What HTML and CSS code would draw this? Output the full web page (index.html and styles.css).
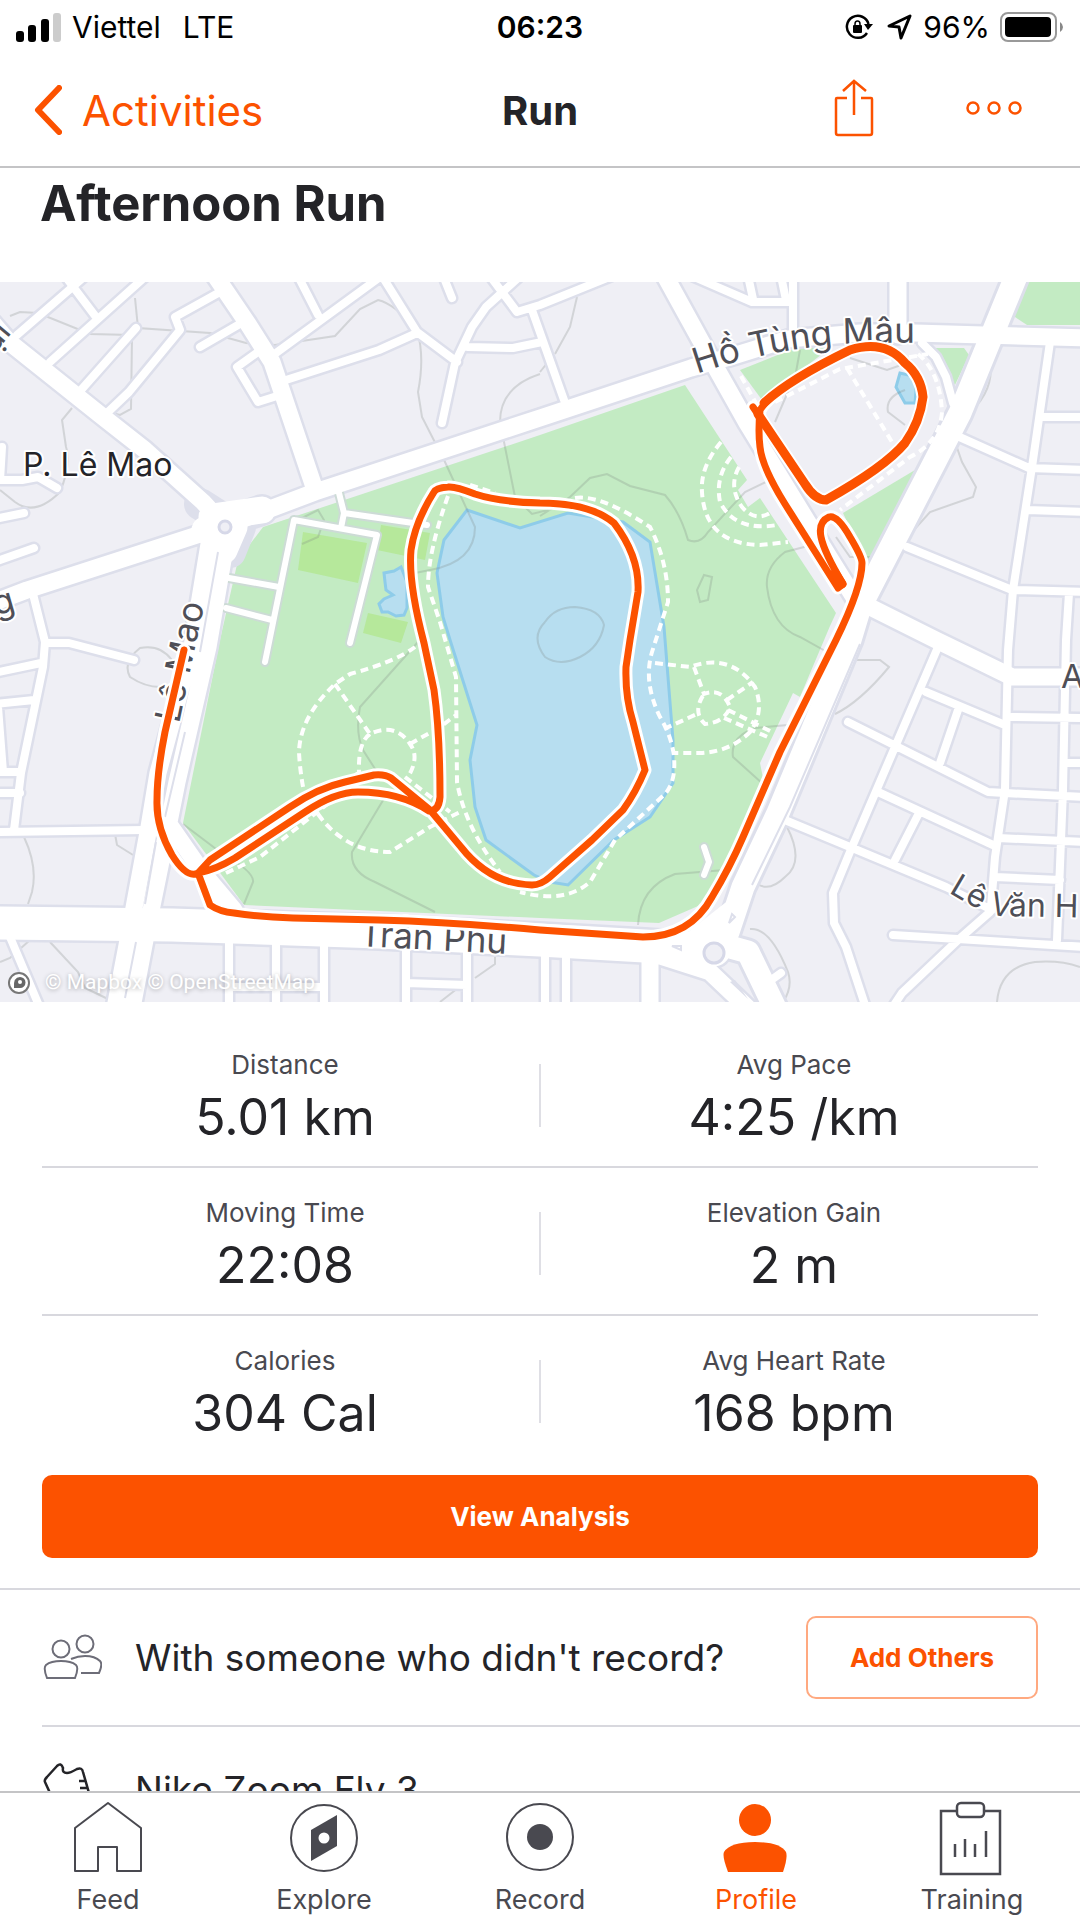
FILE: index.html
```html
<!DOCTYPE html>
<html lang="en">
<head>
  <meta charset="UTF-8">
  <meta name="viewport" content="width=device-width, initial-scale=1">
  <title>Afternoon Run</title>
  <link rel="stylesheet" href="styles.css">
</head>
<body>
  <div class="status-bar">
    <div class="status-left">
      <svg width="46" height="30" viewBox="0 0 46 30">
        <rect x="0" y="19" width="8" height="11" rx="3"/>
        <rect x="12" y="13" width="8" height="17" rx="3"/>
        <rect x="25" y="7" width="8" height="23" rx="3"/>
        <rect x="37" y="1" width="8" height="29" rx="3" fill="#ccc"/>
      </svg>
      <span>Viettel</span>
      <span class="network">LTE</span>
    </div>
    <div class="clock">06:23</div>
    <div class="status-right">
      <svg width="28" height="28" viewBox="0 0 28 28">
        <path d="M22 20A11 11 0 1 1 23.500 11" fill="none" stroke="#000" stroke-width="2.500"/>
        <path d="M19 11h9l-5 6z"/>
        <rect x="8" y="12" width="9" height="8" rx="1"/>
        <path d="M10 13v-2a2.500 3 0 0 1 5 0v2" fill="none" stroke="#000" stroke-width="1.500"/>
      </svg>
      <svg class="arrow" width="26" height="26" viewBox="0 0 26 26">
        <path d="M2 12L23 2L14 24L12 13Z" fill="none" stroke="#000" stroke-width="3" stroke-linejoin="round"/>
      </svg>
      <span>96%</span>
      <svg width="64" height="30" viewBox="0 0 64 30">
        <rect x="1" y="1" width="55" height="28" rx="7" fill="none" stroke="#999" stroke-width="2"/>
        <rect x="5" y="5" width="46" height="20" rx="4"/>
        <path d="M60 10q3 2 3 5t-3 5z" fill="#888"/>
      </svg>
    </div>
  </div>

  <header class="nav-bar">
    <a class="back" href="#">
      <svg width="30" height="50" viewBox="0 0 30 50">
        <path d="M27 3L6 25L27 47" fill="none" stroke="#fc5200" stroke-width="6" stroke-linecap="round" stroke-linejoin="round"/>
      </svg>
      Activities
    </a>
    <div class="nav-title">Run</div>
    <div class="nav-actions">
      <button type="button" aria-label="Share">
        <svg width="40" height="58" viewBox="0 0 40 58">
          <path d="M13 19H3q-1 0-1 1V54q0 2 2 2H36q2 0 2-2V20q0-1-1-1H27M20 36V2M9 12L20 2L32 12" fill="none" stroke="#fc5200" stroke-width="2.500"/>
        </svg>
      </button>
      <button type="button" aria-label="More">
        <svg width="56" height="14" viewBox="0 0 56 14" fill="none" stroke="#fc5200" stroke-width="2.500">
          <circle cx="7" cy="7" r="5.500"/>
          <circle cx="28" cy="7" r="5.500"/>
          <circle cx="49" cy="7" r="5.500"/>
        </svg>
      </button>
    </div>
  </header>

  <main>
    <h1>Afternoon Run</h1>

    <svg class="map" viewBox="0 0 1080 720" role="img" aria-label="Route map">
      <defs>
        <path id="street" d="M17 53L69 8L85 -6M65 -6L96 35M50 80L146 -6M81 108L136 46M107 131L129 110L180 48L175 35L220 10M200 65L238 43M258 70L237 85L258 120L277 114M276 71L380 -5M299 -4L318 33M286 98L379 68L417 51M382 -6L417 50L457 80M442 141L455 81L472 45L486 25L518 -4M444 -4L452 16M490 -6L517 30L540 23L612 -6M468 65L513 66L542 60M532 28L564 118M692 -6L752 20L793 20M748 -6L753 17M781 -6L786 18M793 -6V50M-6 198H22L38 195L57 206M2 165L0 198M-6 237L24 231M-6 280L34 266M33 312L45 360L43 385L21 491L14 548M45 361H69L134 378M-6 391L41 381M-6 422L34 418M-2 425L3 490M-6 490H21M-6 511H20M-6 550L145 548M10 655L40 726M229 655V726M276 655V726M324 655V726M229 705H324M406 655V726M467 655V726M406 701L467 703M566 675V726M545 675V726M767 701L781 691M955 153L1029 186L1086 188M1050 60L1032 185L1013 308L1008 368L1005 508L995 575L991 625M1043 135H1086M1027 228L1086 230M907 265L1012 308L1086 310M1069 311L1066 358L1063 508L1057 658M1012 435L1086 436M1067 481H1086M1005 511L1086 515M998 556L1086 560M995 595L1060 598M938 365L852 565L833 611L834 641L846 665L866 726M926 410L1005 443M848 440L988 510L1005 511M958 428L940 481M878 510L993 563M919 531L895 578M780 536L850 565L946 605L992 628M893 653L1086 665M990 630L958 658L902 711L892 726M922 61L936 75L946 95L953 121"/>
        <path id="avenue" d="M-10 38L9 60L103 135L145 168L203 220L225 244M214 -8L248 42L272 80L315 208M-10 322L27 308L225 244L262 230L315 210L540 136L691 86L733 74L788 57L860 51H915L1090 56M209 262L192 365L158 491L149 545L128 658L115 726M227 255L208 365L177 500L168 545L145 658L132 726M169 542L203 591L234 628M664 -8L702 61L747 141L829 275L860 325M860 320L936 358L1012 395H1090M898 -8V53M650 670V726M660 674L710 690L752 730"/>
        <path id="boulevard" d="M1017 -8L960 131L860 325L850 358L778 531L743 605L728 650M712 660L748 670L776 728"/>
        <path id="parkroad" d="M294 238L377 253L350 361M339 211L344 231L341 246M344 231L427 243M294 238L265 380M229 296L279 305M226 326L272 338M704 565L709 580L704 593"/>
        <path id="route" d="M184 368L165 450Q157 490 157 518Q156 545 172 573Q187 597 198 591L210 578L290 525Q318 506 345 500L374 493Q385 492 391 496L430 528L461 565Q490 602 532 603Q541 603 550 595L592 558L623 528Q636 510 645 488L633 440Q625 415 626 385L630 358L638 310Q640 275 614 241Q590 221 540 221Q499 220 475 212Q455 204 448 205Q436 206 434 210Q415 240 411 268Q408 300 424 361L434 408Q440 450 440 515Q439 529 429 529Q400 510 358 510Q335 510 305 530L235 576Q215 588 198 591L210 623Q220 630 234 631Q260 635 293 636L379 638Q450 640 540 648L643 655Q690 655 712 615Q730 585 743 555L780 470L836 358Q862 305 862 281Q862 275 850 255Q837 232 829 235Q818 240 821 255Q824 270 843 302L838 306L785 222Q762 185 760 165Q758 150 760 128Q775 104 850 68Q885 57 905 81Q921 94 923 115Q920 140 905 161Q885 185 826 218Q815 218 805 202L753 125"/>
        <path id="namePath" d="M697 92Q765 68 843 62Q880 60 960 61"/>
        <path id="leMao" d="M179 442L209 300"/>
        <path id="leVan" d="M948 610Q980 630 1000 634L1200 638"/>
      </defs>

      <rect width="1080" height="720" fill="#efeff5"/>

      <!-- parks, pitches -->
      <g fill="#c3ebc3">
        <path d="M263 245L540 153L685 103L747 198L738 208L748 225L760 216L836 331L830 344L800 415L793 411L760 481L764 501L745 555L725 600L705 621L659 641L540 636L244 623L183 541L220 358L238 278Z"/>
        <path d="M1026 0L1012 33L1027 43H1080V0Z"/>
        <path d="M740 88L795 66H830L762 118Z"/>
        <path d="M933 66H964L969 73L955 103Z"/>
        <path d="M920 185L871 291L843 231Z"/>
      </g>
      <path d="M303 250L367 261L358 301L298 288ZM381 243L430 251L425 278L377 268ZM368 331L408 340L401 361L363 351Z" fill="#b6e89b"/>

      <!-- water -->
      <g fill="#b7def0" stroke="#8ecce9" stroke-width="3">
        <path d="M467 228L520 246L568 231L623 240L650 260L664 345L673 458V501L650 535L614 558L568 603L550 600L534 593L486 558L475 525L470 478L477 443L451 361L443 335L437 291L444 258Z"/>
        <path d="M401 285L394 289L384 291L385 300L386 308L393 313L384 317L379 322L382 330L388 330L396 334L404 333L407 326V300Z"/>
        <path d="M900 91L896 105L905 121H915L917 95Z"/>
      </g>

      <!-- contour lines -->
      <path d="M10 34L20 30L38 31L90 52L132 53M135 16L138 46L210 51L246 61L275 63L335 54L360 27L378 18Q395 22 417 48Q425 75 418 110L422 135L445 180L475 245Q475 280 430 288L415 291M132 55L131 127L120 133L112 131M72 126L62 138L66 165Q72 180 60 210Q35 235 15 220L0 208M540 92Q500 105 500 140L515 215L532 232L560 225M300 237L318 228L324 238L318 255L302 262M540 234L570 215L590 196L607 192L630 204L665 213Q680 230 688 258Q700 263 708 250L745 210L768 199M808 264L785 270Q765 285 767 305Q772 345 800 355L836 375M704 293L712 295L708 318L700 320L697 308ZM545 340Q555 325 575 325Q600 327 604 343Q600 365 580 375Q560 385 545 375Q530 355 545 340M577 15L570 45L555 72M540 90L548 80M790 105L775 140M800 68L796 90M850 76L887 88L910 80M990 80Q995 110 965 135M955 160L962 180L976 205L973 215L930 230L912 250M418 360L360 425Q355 450 363 468L377 490M385 515L352 570Q350 590 375 600L435 630M183 542L220 570Q255 590 253 600L244 622M24 555Q38 585 32 610L28 622M115 552L117 563L133 573M172 378Q160 362 140 366Q122 380 130 395Q145 405 160 405M788 443L755 446Q730 455 733 475L763 502M638 643Q640 605 675 592L725 588M787 545Q805 580 785 595Q770 610 757 602M750 647Q770 645 788 690Q793 705 783 720M857 378H880L889 385Q860 420 835 432M997 720Q1000 685 1035 680Q1060 678 1080 685M0 680L10 676L30 658M50 660L78 690L85 706L110 718M495 675V682L475 696M440 720L458 706M865 275L885 275M836 255L850 275L860 275M905 108Q885 115 888 130L905 143" fill="none" stroke="#7d8480" stroke-opacity=".25" stroke-width="2"/>

      <!-- roads: casing first, white fill on top -->
      <g class="lines" stroke="#dddfeb">
        <use href="#street" stroke-width="13"/>
        <use href="#avenue" stroke-width="22"/>
        <use href="#boulevard" stroke-width="29"/>
        <path d="M-10 641L172 643L379 650L540 658L714 668" stroke-width="38"/>
        <path d="M225 238L200 222M225 240L262 228M240 245L230 270" stroke-width="32"/>
      </g>
      <use class="lines" href="#parkroad" stroke="#cddbd6" stroke-width="10"/>
      <g class="lines" stroke="#fff">
        <use href="#street" stroke-width="8"/>
        <use href="#avenue" stroke-width="17"/>
        <use href="#boulevard" stroke-width="23"/>
        <use href="#parkroad" stroke-width="6"/>
        <path d="M-10 641L172 643L379 650L540 658L714 668" stroke-width="33"/>
        <path d="M212 235L262 228M234 245L224 268M226 242L205 248" stroke-width="27"/>
        <path d="M690 655L728 625L735 668L700 680Z" stroke-width="10" fill="#fff"/>
      </g>
      <path d="M218 270L200 370M185 450L165 535M156 560L145 622M136 660L125 716M860 362L790 525L752 603M735 635L729 641L732 632ZM672 664L681 668V664Z" fill="none" stroke="#dddfeb" stroke-width="2"/>
      <circle cx="225" cy="245" r="6" fill="#efeff5" stroke="#d6d8e8" stroke-width="3"/>
      <circle cx="714" cy="671" r="10" fill="#efeff5" stroke="#d6d8e8" stroke-width="3"/>
      <path d="M735 698L748 717L730 700Z" fill="#dddfeb"/>

      <!-- footpaths -->
      <path d="M721 160Q700 185 702 210Q705 262 760 263L788 260M731 175Q715 195 720 220Q735 250 777 243M739 185Q728 205 742 225Q755 240 770 231M448 214Q428 270 428 305L440 340L456 395L457 500Q465 545 500 590M415 365Q395 380 350 392L335 402Q300 435 299 470Q300 490 304 510M335 402L370 452Q395 440 410 462Q420 475 408 495M370 452Q358 460 359 490L352 497M410 462L440 445L456 433M318 532Q345 570 390 570L430 545L460 530M226 591L260 575L330 520M405 495L450 530M470 203L495 211M575 216Q600 212 650 245Q668 280 668 320L652 370Q643 400 660 435Q672 455 674 475Q676 500 665 512L615 558L590 600Q565 622 520 610M655 381L690 385Q730 370 755 405Q765 430 750 450Q730 470 700 471H672M694 385L704 412Q722 405 730 425Q725 440 705 442Q692 430 704 412M664 447L697 432M727 418L753 400M728 428L772 450M724 436L770 456M741 94L758 125M775 120L840 87L928 72M847 86L895 165M918 72Q940 90 942 130Q940 160 910 175L840 228M866 290L873 296" fill="none" stroke="#fff" stroke-width="4" stroke-dasharray="8 5"/>

      <!-- street names -->
      <g class="map-text">
        <text font-size="35"><textPath href="#namePath">Hồ Tùng Mâu</textPath></text>
        <text font-size="35"><textPath href="#leMao">Lê Mao</textPath></text>
        <text font-size="32"><textPath href="#leVan">Lê Văn H</textPath></text>
        <text x="359" y="664" font-size="35" transform="rotate(3 359 664)">Trần Phú</text>
        <text x="1061" y="406" font-size="33">A</text>
        <text x="-5" y="333" font-size="35" transform="rotate(-16 0 330)">g</text>
        <text x="-10" y="64" font-size="33" transform="rotate(-50 0 62)">ại</text>
        <text class="district" x="23" y="194" font-size="32">P. Lê Mao</text>
      </g>

      <use class="lines" href="#route" stroke="#fff" stroke-width="13"/>
      <use class="lines" href="#route" stroke="#fc5200" stroke-width="7"/>
      <path class="lines" d="M764 121Q790 97 850 68Q885 57 905 81Q921 94 923 115Q920 140 905 161Q885 185 826 218Q815 218 805 202L758 132M842 302L835 291" stroke="#fc5200" stroke-width="9"/>

      <circle cx="19" cy="701" r="10" fill="#fff" stroke="#777" stroke-width="2"/>
      <path d="M14 706Q13 695 20 695A5 5 0 0 1 20 706Z" fill="#666"/>
      <circle cx="20" cy="700" r="2" fill="#fff"/>
      <text class="credit" x="45" y="707">© Mapbox © OpenStreetMap</text>
    </svg>

    <dl class="stats">
      <div class="stat"><dt>Distance</dt><dd>5.01 km</dd></div>
      <div class="stat"><dt>Avg Pace</dt><dd>4:25 /km</dd></div>
      <div class="stat"><dt>Moving Time</dt><dd>22:08</dd></div>
      <div class="stat"><dt>Elevation Gain</dt><dd>2 m</dd></div>
      <div class="stat"><dt>Calories</dt><dd>304 Cal</dd></div>
      <div class="stat"><dt>Avg Heart Rate</dt><dd>168 bpm</dd></div>
    </dl>

    <div class="analysis">
      <button type="button" class="primary">View Analysis</button>
    </div>

    <div class="row">
      <svg width="60" height="48" viewBox="0 0 60 48" fill="none" stroke="#6d6d78" stroke-width="2">
        <circle cx="19" cy="15" r="8.500"/>
        <circle cx="43" cy="10" r="8.500"/>
        <path d="M5 44Q1 34 4 31Q9 27 19 27T34 31Q37 34 33 44Z"/>
        <path d="M29 25Q36 22 43 22Q53 22 58 27Q61 30 57 39H39"/>
      </svg>
      <span>With someone who didn't record?</span>
      <button type="button" class="outline">Add Others</button>
    </div>
    <div class="row gear">
      <svg width="60" height="52" viewBox="0 0 60 52" fill="none" stroke="#242428" stroke-width="2.500">
        <path d="M8 30L3 19Q2 17 5 14L15 3Q19 -1 21 5Q20 10 25 10Q28 10 35 6Q40 4 41 9L47 30M44 18H37M46 25H38M47 30L56 50H18L8 30"/>
      </svg>
      <span>Nike Zoom Fly 3</span>
    </div>
  </main>

  <nav class="tabs">
    <a href="#">
      <svg width="76" height="76" viewBox="0 0 76 76" fill="none" stroke="#494950" stroke-width="2" stroke-linejoin="round">
        <path d="M38 3L71 28V71H47V47H28V71H5V28Z"/>
      </svg>
      Feed
    </a>
    <a href="#">
      <svg width="76" height="76" viewBox="0 0 76 76">
        <circle cx="38" cy="38" r="33" fill="none" stroke="#494950" stroke-width="2"/>
        <path d="M25 30L51 15V46L25 61Z" fill="#494950"/>
        <circle cx="38" cy="38" r="5.500" fill="#fff"/>
      </svg>
      Explore
    </a>
    <a href="#">
      <svg width="76" height="76" viewBox="0 0 76 76">
        <circle cx="38" cy="37" r="33" fill="none" stroke="#494950" stroke-width="2"/>
        <circle cx="38" cy="37" r="13" fill="#494950"/>
      </svg>
      Record
    </a>
    <a href="#" class="active">
      <svg width="76" height="76" viewBox="0 0 76 76" fill="#fc5200">
        <circle cx="37" cy="20" r="16"/>
        <path d="M10 72Q4 56 6 52Q12 42 37 42T68 52Q70 57 65 72Z"/>
      </svg>
      Profile
    </a>
    <a href="#">
      <svg width="76" height="76" viewBox="0 0 76 76" fill="none" stroke="#494950" stroke-width="2.500">
        <path d="M23 11H7V74H66V11H50M21 57V44M31 57V39M41 57V44M52 57V31"/>
        <rect x="23" y="3" width="27" height="14" rx="4"/>
      </svg>
      Training
    </a>
  </nav>
</body>
</html>
```

FILE: styles.css
```css
* {
  box-sizing: border-box;
}
body {
  margin: 0;
  height: 100vh;
  display: flex;
  flex-direction: column;
  background: #fff;
  color: #242428;
  font-family: Inter, "Liberation Sans", sans-serif;
}
button {
  font-family: inherit;
  cursor: pointer;
}
a {
  text-decoration: none;
}

/* status bar */
.status-bar {
  display: grid;
  grid-template-columns: 1fr auto 1fr;
  align-items: center;
  height: 54px;
  padding: 0 16px;
  color: #000;
  font-size: 30px;
}
.status-left,
.status-right {
  display: flex;
  align-items: center;
  gap: 10px;
}
.network {
  margin-left: 12px;
}
.status-right {
  justify-content: flex-end;
}
.arrow {
  margin-left: 4px;
}
.clock {
  font-weight: 600;
}

/* navigation bar */
.nav-bar {
  display: grid;
  grid-template-columns: 1fr auto 1fr;
  align-items: center;
  height: 114px;
  padding: 0 32px;
  border-bottom: 2px solid #c4c4c6;
}
.back {
  display: flex;
  align-items: center;
  gap: 20px;
  color: #fc5200;
  font-size: 42px;
}
.nav-title {
  font-size: 40px;
  font-weight: 700;
}
.nav-actions {
  display: flex;
  align-items: center;
  justify-content: flex-end;
  gap: 92px;
  padding: 0 26px 4px 0;
}
.nav-actions button {
  display: flex;
  align-items: center;
  padding: 0;
  border: none;
  background: none;
}

/* activity */
main {
  flex: 1;
  min-height: 0;
  overflow: hidden;
}
h1 {
  margin: 0;
  padding: 6px 40px 48px;
  font-size: 49px;
  line-height: 60px;
  font-weight: 700;
}
.map {
  display: block;
  width: 100%;
  height: auto;
}
.lines {
  fill: none;
  stroke-linecap: round;
  stroke-linejoin: round;
}
.map-text {
  fill: #4f4f57;
  stroke: #fff;
  stroke-width: 4px;
  stroke-linejoin: round;
  paint-order: stroke;
}
.district {
  fill: #242428;
}
.credit {
  fill: #fff;
  font-family: Roboto, sans-serif;
  font-size: 21px;
  text-shadow: 0 1px 4px rgba(0, 0, 0, 0.3);
}

.stats {
  display: grid;
  grid-template-columns: 1fr 1fr;
  margin: 0;
  padding: 18px 42px 0;
}
.stat {
  position: relative;
  height: 148px;
  padding-top: 26px;
  text-align: center;
  border-bottom: 2px solid #d8d8de;
}
.stat:nth-child(odd) {
  padding-right: 12px;
}
.stat:nth-child(even) {
  padding-left: 10px;
}
.stat:nth-last-child(-n+2) {
  border-bottom: none;
}
.stat:nth-child(odd)::after {
  content: "";
  position: absolute;
  top: 44px;
  right: -1px;
  width: 2px;
  height: 63px;
  background: #dfdfe5;
}
dt {
  color: #494950;
  font-size: 26px;
  line-height: 38px;
}
dd {
  margin: 0;
  font-size: 50px;
  line-height: 66px;
}

.analysis {
  padding: 11px 42px 30px;
  border-bottom: 2px solid #d8d8de;
}
.primary,
.outline {
  height: 83px;
  border-radius: 10px;
  font-size: 26px;
  font-weight: 700;
}
.primary {
  display: block;
  width: 100%;
  border: none;
  background: #fc5200;
  color: #fff;
}
.outline {
  width: 232px;
  margin-left: auto;
  border: 2px solid #ffa980;
  background: #fff;
  color: #fc5200;
}
.row {
  display: flex;
  align-items: center;
  gap: 33px;
  height: 137px;
  margin-left: 42px;
  padding-right: 42px;
  border-bottom: 2px solid #d8d8de;
  font-size: 37px;
}
.gear {
  height: 126px;
}

/* tab bar */
.tabs {
  display: grid;
  grid-template-columns: repeat(5, 1fr);
  height: 129px;
  padding-top: 7px;
  border-top: 2px solid #c4c4c6;
  background: #fff;
}
.tabs a {
  display: flex;
  flex-direction: column;
  align-items: center;
  gap: 8px;
  color: #494950;
  font-size: 27px;
  line-height: 32px;
}
.tabs .active {
  color: #fc5200;
}
```
